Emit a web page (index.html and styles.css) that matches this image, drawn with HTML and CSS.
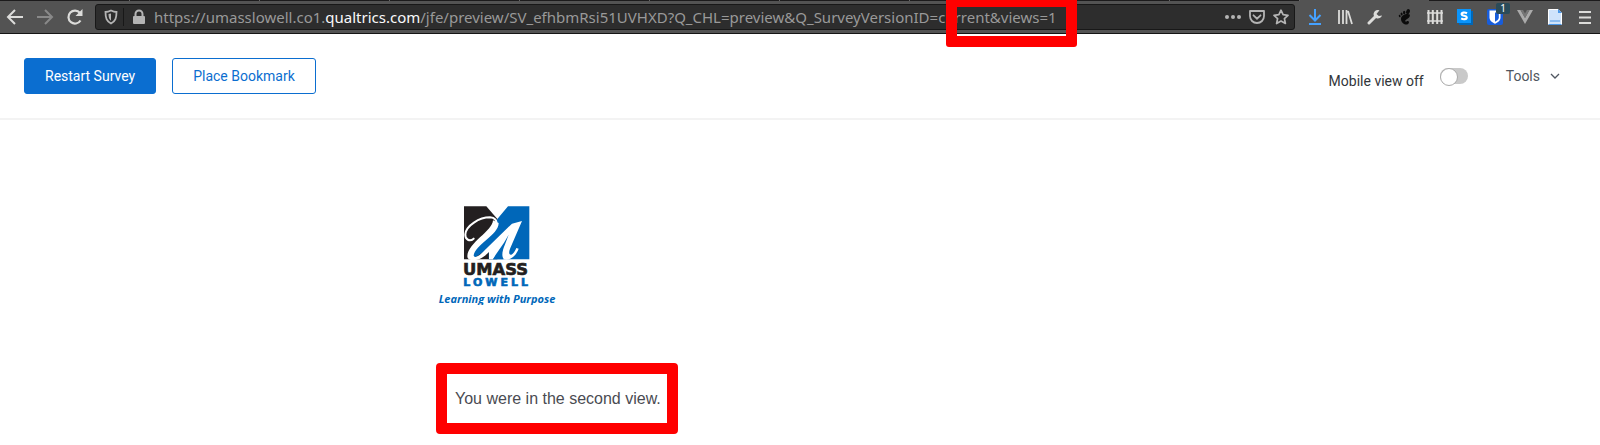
FILE: index.html
```html
<!DOCTYPE html>
<html lang="en">
<head>
<meta charset="utf-8">
<title>Survey Preview</title>
<link rel="stylesheet" href="styles.css">
</head>
<body>
<div class="browser">
  <div class="tabs"><span class="tabs-idle"></span><span class="tab-active"></span><span class="tabs-rest"></span></div>
  <nav class="toolbar" aria-label="Browser">
    <button class="tool" aria-label="Back"><svg width="18" height="18" viewBox="0 0 18 18"><path d="M17 9H2M9 2 2 9l7 7" fill="none" stroke="#dcdcda" stroke-width="2"/></svg></button>
    <button class="tool" aria-label="Forward"><svg width="18" height="18" viewBox="0 0 18 18"><path d="M1 9h15M9 2l7 7-7 7" fill="none" stroke="#898989" stroke-width="2"/></svg></button>
    <button class="tool" aria-label="Reload"><svg width="18" height="18" viewBox="0 0 18 18"><path d="M14.500 12.500A6.500 6.500 0 1 1 14 5" fill="none" stroke="#dcdcda" stroke-width="2.200"/><path d="M16.500 1v7H9.500z" fill="#dcdcda"/></svg></button>
    <div class="urlbar">
      <button class="url-icon shield" aria-label="Tracking protection"><svg width="14" height="16" viewBox="0 0 14 16"><path d="M7 1.500C5 2.500 3 3 1.500 3c0 6 1 9 5.500 11.500C11.500 12 12.500 9 12.500 3 11 3 9 2.500 7 1.500z" fill="none" stroke="#b4b4b4" stroke-width="1.800"/><path d="M7 4.500 4.500 5c0 3.500.7 5.300 2.500 6.700z" fill="#b4b4b4"/></svg></button>
      <button class="url-icon lock" aria-label="Site information"><svg width="14" height="16" viewBox="0 0 14 16"><path d="M3.500 7V5a3.500 3.500 0 0 1 7 0v2" fill="none" stroke="#b4b4b4" stroke-width="2"/><rect x="1" y="7" width="12" height="8" rx="1" fill="#b4b4b4"/></svg></button>
      <div class="url" role="textbox" aria-label="Address" contenteditable="true" spellcheck="false">https://umasslowell.co1.<span class="domain">qualtrics.com</span>/jfe/preview/SV_efhbmRsi51UVHXD?Q_CHL=preview&amp;Q_SurveyVersionID=current&amp;views=1</div>
      <button class="url-icon" aria-label="Page actions"><svg width="16" height="16" viewBox="0 0 16 16" fill="#b4b4b4"><circle cx="2" cy="8" r="2"/><circle cx="8" cy="8" r="2"/><circle cx="14" cy="8" r="2"/></svg></button>
      <button class="url-icon" aria-label="Save to Pocket"><svg width="16" height="16" viewBox="0 0 16 16" fill="none" stroke="#b4b4b4" stroke-width="1.800"><path d="M1 2h14v5c0 4-3 7-7 7S1 11 1 7z" stroke-linejoin="round"/><path d="m4.500 6.300 3.500 3.400 3.500-3.400" stroke-linecap="round"/></svg></button>
      <button class="url-icon" aria-label="Bookmark this page"><svg width="16" height="16" viewBox="0 0 16 16"><path d="m8 1.200 2.100 4.500 4.900.6-3.600 3.300 1 4.900L8 12.100l-4.400 2.400 1-4.900L1 6.300l4.900-.6z" fill="none" stroke="#b4b4b4" stroke-width="1.700" stroke-linejoin="round"/></svg></button>
    </div>
    <button class="tool" aria-label="Downloads"><svg width="16" height="16" viewBox="0 0 16 16"><path d="M8 0v11M2.500 6 8 11.500 13.500 6M2 15h12" fill="none" stroke="#45a1ff" stroke-width="2"/></svg></button>
    <button class="tool" aria-label="Library"><svg width="16" height="16" viewBox="0 0 16 16"><path d="M2 1v14M6 1v14M9.500 1v14M11 2l4 13" fill="none" stroke="#dcdcda" stroke-width="1.800"/></svg></button>
    <button class="tool" aria-label="Developer tools"><svg width="16" height="16" viewBox="0 0 16 16"><path d="M2 14l7-7" stroke="#dcdcda" stroke-width="3" stroke-linecap="round"/><path d="M12.500 1.200A4.300 4.300 0 1 0 15 6.500l-3.200.5-2.300-2z" fill="#dcdcda"/></svg></button>
    <button class="tool" aria-label="GNOME Shell integration"><svg width="16" height="16" viewBox="0 0 16 16" fill="#0b0b0b"><path d="M12.700 5.600c-2.300-1.500-8.700.2-8.700 4.300 0 3.500 3.500 6.100 6.200 5.600 2-.4 2.300-2.900 1-3.500-1.100-.5-1.600 1.100-2.700.5-2-1.200 5.800-3.400 4.200-6.900z"/><ellipse cx="11" cy="2.600" rx="1.800" ry="2.600" transform="rotate(20 11 2.600)"/><ellipse cx="7.200" cy="3.600" rx="1.200" ry="1.900"/><ellipse cx="4.600" cy="5.100" rx="1" ry="1.500" transform="rotate(-15 4.600 5.100)"/><ellipse cx="2.700" cy="7" rx=".9" ry="1.200" transform="rotate(-20 2.700 7)"/></svg></button>
    <button class="tool" aria-label="Fence"><svg width="16" height="16" viewBox="0 0 16 16"><path d="M1.500 1v14M5.800 1v14M10.200 1v14M14.500 1v14" stroke="#dcdcda" stroke-width="2"/><path d="M0 4h16M0 12h16" stroke="#dcdcda" stroke-width="1.300"/></svg></button>
    <button class="tool" aria-label="Stylus"><svg width="16" height="16" viewBox="0 0 16 16"><rect x="2" y="2" width="14" height="14" fill="#0067b8"/><rect width="14" height="14" fill="#0a94fb"/><path d="M10 4.200c-2.500-1.300-5.500-.7-5.300 1.100.2 1.900 5 1 5 3.200 0 2-3.500 2.200-5.500.9" fill="none" stroke="#fff" stroke-width="2.200"/></svg></button>
    <button class="tool badged" aria-label="Bitwarden"><svg width="16" height="16" viewBox="0 0 16 16"><rect width="16" height="16" rx="2" fill="#175ddc"/><path d="M2.500 1.500h11v7c0 3-2.500 4.800-5.500 6.300C5 13.300 2.500 11.500 2.500 8.500z" fill="#fff"/><path d="M8 3.500h3.800v5c0 2-1.600 3-3.800 4.200z" fill="#175ddc"/></svg><span class="badge">1</span></button>
    <button class="tool" aria-label="Vue devtools"><svg width="16" height="16" viewBox="0 0 16 16"><path d="M0 1h3.500L8 9l4.500-8H16L8 15z" fill="#aaa"/><path d="M3.500 1H6l2 3.500L10 1h2.500L8 9z" fill="#777"/></svg></button>
    <button class="tool" aria-label="Document"><svg width="16" height="16" viewBox="0 0 16 16"><path d="M1.500.5H11l3.500 3.500v11.500h-13z" fill="#cfe3fb" stroke="#fff"/><path d="M11 0v4h4z" fill="#4a97e8"/><path d="M3 12h10M1.500 15.500h13" stroke="#4a97e8"/></svg></button>
    <button class="tool" aria-label="Menu"><svg width="16" height="16" viewBox="0 0 16 16"><path d="M2 3h12M2 8.500h12M2 14h12" stroke="#dcdcda" stroke-width="2"/></svg></button>
  </nav>
  <div class="url-highlight"></div>
</div>
<header class="preview-bar">
  <button class="btn primary">Restart Survey</button>
  <button class="btn">Place Bookmark</button>
  <label class="mobile" for="mobile-view">Mobile view off</label>
  <input class="switch" id="mobile-view" type="checkbox" role="switch">
  <button class="tools-menu">Tools <svg width="10" height="6" viewBox="0 0 10 6"><path d="m1 1 4 4 4-4" fill="none" stroke="#4f5660" stroke-width="1.300"/></svg></button>
</header>
<main class="survey">
  <svg class="logo" width="118" height="100" viewBox="40 30 354 300" role="img" aria-label="UMass Lowell">
    <path d="M118 34h67l33 38v121H118z" fill="#231f20"/>
    <path d="M218 72l32-38h64v159H192v-24l-20 5-22 14-8-6 22-42 44-44z" fill="#0067b9"/>
    <path d="M147 131c-12 10-26 3-25-13 2-26 42-51 74-51 14 1 22 9 18 22" fill="none" stroke="#fff" stroke-width="6" stroke-linecap="round"/>
    <path d="M205 76c-1 32-76 68-77 108 0 12 14 14 28 8l-9-10c3-32 75-62 75-98z" fill="#fff"/>
    <path d="M292 78l-30 8-82 80c-12 14-24 21-36 22l2 7c20 1 36-13 47-24v22h12l33-42c-9 21-10 42 6 43 18 1 32-17 38-33l-7-2c-4 9-9 18-15 20-9 2-7-11-3-20z" fill="#fff"/>
    <path d="M252 119l-14 24-25 36-8 14h31c-6-12-2-28 4-42z" fill="#0067b9"/>
    <text class="logo-umass" x="115" y="239">UMASS</text>
    <text class="logo-lowell" x="116" y="272">LOWELL</text>
    <text class="logo-tag" x="42" y="323">Learning with Purpose</text>
  </svg>
  <p class="question">You were in the second view.</p>
</main>
</body>
</html>
```
FILE: styles.css
```css
* { box-sizing: border-box; }
body { margin: 0; background: #fff; font-family: Roboto, sans-serif; font-size: 14px; }
button { font: inherit; margin: 0; padding: 0; border: 0; background: none; cursor: pointer; }

.browser { position: relative; background: #535353; border-bottom: 1px solid #151515; }
.tabs { display: flex; height: 1px; }
.tabs-idle { flex: 1; background: repeating-linear-gradient(90deg, #1c1b1c 0 129px, #666 129px 130px); }
.tab-active { width: 129px; }
.tabs-rest { width: 171px; background: #1c1b1c; }
.toolbar { display: flex; align-items: center; height: 32px; }
.tool { width: 30px; height: 32px; flex: none; display: flex; align-items: center; justify-content: center; }
.urlbar {
  flex: 1; min-width: 0; height: 26px; margin: 0 5px; padding: 0 1px 0 2px;
  display: flex; align-items: center;
  background: #2d2d2d; border: 1px solid #181818; border-radius: 3px;
}
.url-icon { width: 24px; height: 24px; flex: none; display: flex; align-items: center; justify-content: center; }
.shield { width: 26px; height: 18px; border-right: 1px solid #181818; }
.lock { width: 30px; }
.url {
  flex: 1; min-width: 0; overflow: hidden; white-space: nowrap; outline: 0;
  font: 15px/24px "Noto Sans", sans-serif; color: #999;
}
.domain { color: #f9f9fa; }
.badged { position: relative; }
.badge {
  position: absolute; left: 16px; top: 2px; width: 14px; height: 11px;
  background: #2a4b59; border-radius: 2px; color: #fff; font: 10px/11px "Noto Sans", sans-serif;
}
.url-highlight {
  position: absolute; left: 946px; top: 0; width: 131px; height: 47px;
  border: 11px solid #f00; border-top-width: 7px; border-radius: 0 0 3px 3px; pointer-events: none;
}

.preview-bar {
  display: flex; align-items: center; gap: 16px; padding: 24px 40px 24px 24px;
  border-bottom: 2px solid #f3f3f3;
}
.btn { height: 36px; padding: 0 20px; border: 1px solid #0b6ed0; border-radius: 3px; color: #0b6ed0; background: #fff; }
.primary { background: #0b6ed0; color: #fff; }
.mobile { margin-left: auto; padding-top: 10px; color: #32363a; }
.switch {
  appearance: none; width: 28px; height: 16px; margin: 0; border-radius: 8px; background: #c9c9c9;
}
.switch::before {
  content: ""; display: block; width: 16px; height: 16px; border: 1px solid #aaa; border-radius: 50%; background: #fff;
}
.tools-menu { display: flex; align-items: center; gap: 10px; margin-left: 22px; color: #4f5660; }

.survey { width: 728px; max-width: 100%; margin: 0 auto; padding-top: 85px; }
.logo { display: block; margin-left: 2px; }
.logo-umass { font: bold 49px "DejaVu Sans", sans-serif; fill: #231f20; stroke: #231f20; stroke-width: 2px; }
.logo-lowell { font: bold 33px "DejaVu Sans", sans-serif; letter-spacing: 9px; fill: #0067b9; stroke: #0067b9; stroke-width: 2px; }
.logo-tag { font: italic bold 33px "Open Sans", sans-serif; fill: #0067b9; }
.question {
  width: max-content; margin: 58px 0 10px; padding: 13px 6px 12px 8px;
  border: 11px solid #f00; border-radius: 4px;
  font: 16px/24px "Liberation Sans", sans-serif; color: #4a4b52;
}
```
